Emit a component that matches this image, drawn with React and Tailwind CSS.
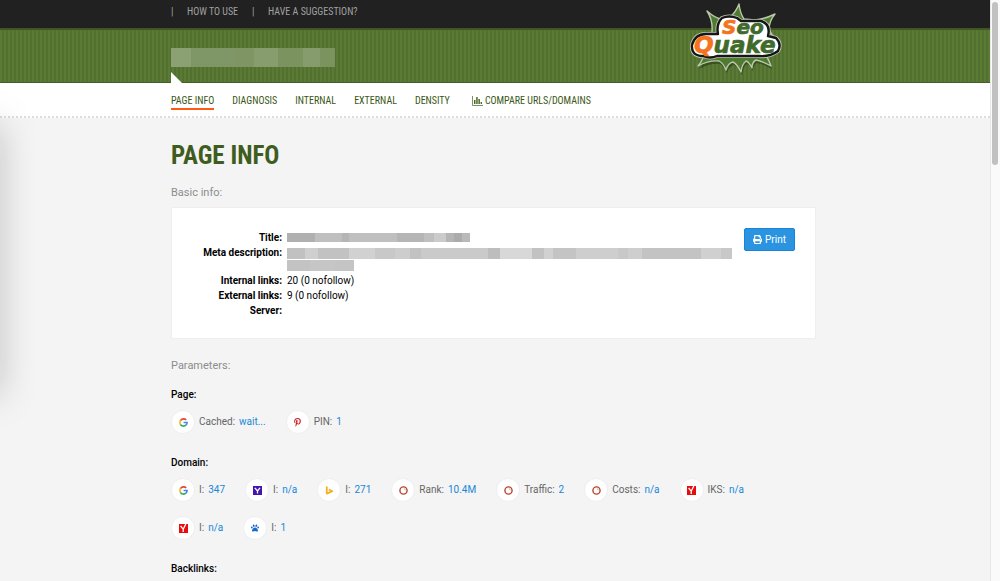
import React from 'react';
import { FaPaw, FaPinterestP, FaPrint } from 'react-icons/fa';

const condensed = "font-['Roboto_Condensed','Liberation_Sans_Narrow',Roboto,sans-serif]";

const topLinks = ['How to use', 'Have a suggestion?'];

const tabs = ['Page info', 'Diagnosis', 'Internal', 'External', 'Density'];

// [width, colour] of each block in a masked value
const siteMask = [
  [20, '#8ca173'], [44, '#7f9766'], [19, '#7f9664'], [24, '#879d6d'],
  [25, '#7b935f'], [17, '#879c6d'], [15, '#7b935f'],
];
const titleMask = [
  [28, '#b0b0b0'], [27, '#bfbfbf'], [7, '#b5b5b5'], [48, '#bfbfbf'], [27, '#b5b5b5'],
  [10, '#bfbfbf'], [12, '#cbcbcb'], [8, '#b5b5b5'], [8, '#ababab'], [8, '#b9b9b9'],
];
const metaMask = [
  [18, '#c1c1c1'], [13, '#cfcfcf'], [31, '#c2c2c2'], [26, '#d1d1d1'], [20, '#c8c8c8'],
  [15, '#cdcdcd'], [11, '#c2c2c2'], [67, '#cacaca'], [12, '#bdbdbd'], [32, '#d8d8d8'],
  [12, '#c2c2c2'], [9, '#d1d1d1'], [23, '#c4c4c4'], [42, '#cecece'], [10, '#c8c8c8'],
  [14, '#cecece'], [59, '#c3c3c3'], [20, '#d0d0d0'], [11, '#c8c8c8'],
];
const metaMask2 = [[23, '#c3c3c3'], [25, '#c6c6c6'], [19, '#c4c4c4']];

const Mask = ({ blocks, className }) => (
  <div className={`flex ${className}`}>
    {blocks.map(([width, color], i) => (
      <span key={i} className="h-full" style={{ width, backgroundColor: color }} />
    ))}
  </div>
);

const burst =
  'M26 11 Q34 18 40 19 L49 17 Q55 12 58 4 Q59 13 63 19 L74 20 Q84 19 94 14 Q88 21 88 30 L97 44 L84 54 Q87 58 90 66 Q81 61 75 60 Q71 62 71 68 Q68 62 65 61 Q61 64 60 72 Q56 64 52 62 Q47 63 45 70 Q43 64 38 61 Q28 60 17 66 Q23 59 23 52 L17 46 L31 32 Q32 20 26 11 Z';
const plate =
  'M41 18 Q48 15 56 18 L60 21 H80 Q90 24 87 36 L95 38 Q101 44 97 51 Q89 57 78 56 H36 Q29 59 22 56 Q10 56 11 45 Q14 34 25 34 L37 34 Q35 24 41 18 Z';

const Logo = () => (
  <svg viewBox="0 0 110 85" className="h-[85px] w-[110px]" role="img" aria-label="SeoQuake">
    <path d={burst} fill="#1d2b0e" opacity="0.5" transform="translate(1 3)" />
    <path d={burst} fill="#4f7a2f" stroke="#b9c7ab" strokeWidth="1.4" strokeLinejoin="round" />
    {/* plate behind the lettering */}
    <path d={plate} stroke="#c3cbbd" strokeWidth="4" strokeLinejoin="round" />
    <path d={plate} fill="#fff" stroke="#161616" strokeWidth="2.4" strokeLinejoin="round" />
    <g
      fontFamily="'DejaVu Sans', sans-serif"
      fontWeight="700"
      fontStyle="italic"
      fill="#3f6a2a"
    >
      <text x="41" y="34" fontSize="20" stroke="#3f6a2a" strokeWidth=".7">
        <tspan fill="#f4731f" stroke="#f4731f">S</tspan>eo
      </text>
      <text x="13" y="53" fontSize="23" stroke="#3f6a2a" strokeWidth=".7">
        <tspan fill="#f4731f" stroke="#f4731f">Q</tspan>uake
      </text>
    </g>
  </svg>
);

const ChartIcon = () => (
  <svg viewBox="0 0 11 10" className="h-[10px] w-[11px]" aria-hidden="true">
    <path d="M.5 0V9.5H11" fill="none" stroke="#7c9161" />
    <path d="M2 4h1.5v4H2zM4.2 1h1.5v7H4.2zM6.4 3h1.5v5H6.4zM8.6 6H10v2H8.6z" fill="#4b6b2c" />
  </svg>
);

const GoogleIcon = () => (
  <svg viewBox="0 0 9 9" className="size-[9px]" fill="none" strokeWidth="1.6">
    <path d="M7.2 2A3.6 3.6 0 0 0 1.4 2.7" stroke="#ea4335" />
    <path d="M1.4 2.7A3.6 3.6 0 0 0 1.4 6.3" stroke="#fbbc05" />
    <path d="M1.4 6.3A3.6 3.6 0 0 0 6.9 7.2" stroke="#34a853" />
    <path d="M6.9 7.2A3.6 3.6 0 0 0 8.1 4.5H4.6" stroke="#4285f4" />
  </svg>
);

const YahooIcon = () => (
  <svg viewBox="0 0 9 9" className="size-[9px]">
    <path d="M0 0h9v9H0z" fill="#4414b0" />
    <path d="M1.8 1.8 4.5 5 7 1.8M4.5 4.8v2.7" fill="none" stroke="#fff" strokeWidth="1.3" />
  </svg>
);

const BingIcon = () => (
  <svg viewBox="0 0 9 9" className="size-[9px]">
    <path d="M1.8 .4V7.6L7.4 5.2 3.8 3.6" fill="none" stroke="#f5b120" strokeWidth="1.8" strokeLinejoin="round" />
  </svg>
);

const SemrushIcon = () => (
  <svg viewBox="0 0 9 9" className="size-[9px]">
    <circle cx="4.5" cy="4.5" r="3.6" fill="#fff" stroke="#b8442c" strokeWidth="1.4" />
    <path d="M4.8 2.6a1.9 1.9 0 0 1 1.6 1.7" fill="none" stroke="#d99080" strokeWidth=".8" />
  </svg>
);

const YandexIcon = () => (
  <svg viewBox="0 0 9 9" className="size-[9px]">
    <path d="M0 0h9v9H0z" fill="#e90c0c" />
    <path d="M1.6 2 4.2 5.2V8M4.2 5.2 6.8 0" fill="none" stroke="#fff" strokeWidth="1.3" />
  </svg>
);

const PinterestIcon = () => <FaPinterestP className="size-[9px] text-[#c8181e]" />;
const BaiduIcon = () => <FaPaw className="size-[8px] text-[#1766cf]" />;

const pageParams = [
  { icon: GoogleIcon, label: 'Cached', value: 'wait...' },
  { icon: PinterestIcon, label: 'PIN', value: '1' },
];

const domainParams = [
  { icon: GoogleIcon, label: 'I', value: '347' },
  { icon: YahooIcon, label: 'I', value: 'n/a' },
  { icon: BingIcon, label: 'I', value: '271' },
  { icon: SemrushIcon, label: 'Rank', value: '10.4M' },
  { icon: SemrushIcon, label: 'Traffic', value: '2' },
  { icon: SemrushIcon, label: 'Costs', value: 'n/a' },
  { icon: YandexIcon, label: 'IKS', value: 'n/a' },
  { icon: YandexIcon, label: 'I', value: 'n/a' },
  { icon: BaiduIcon, label: 'I', value: '1' },
];

const ParamList = ({ items }) => (
  <ul className="flex flex-wrap gap-x-5 gap-y-[14px]">
    {items.map((item, i) => (
      <li key={i} className="flex items-center text-[#666]">
        <span className="mr-1 flex size-6 items-center justify-center rounded-full border border-[#eee] bg-white">
          <item.icon />
        </span>
        <span>{item.label}:</span>
        <a href="#" className="ml-1 text-[#1787d8]">{item.value}</a>
      </li>
    ))}
  </ul>
);

const InfoRow = ({ label, children }) => (
  <tr className="align-top">
    <th scope="row" className="w-[110px] pb-[3px] text-right font-bold">{label}:</th>
    <td className="pl-[5px]">{children}</td>
  </tr>
);

const App = () => {
  return (
    <div className="relative flex h-screen overflow-hidden bg-[#f4f4f4] font-[Roboto,sans-serif] text-[10px] leading-3 text-black">
      <div className="min-w-0 flex-1">
        <header className="border-b border-[#466021] bg-[linear-gradient(#212121_28px,#3f5620_28px,#3f5620_30px,transparent_30px),repeating-linear-gradient(90deg,#5b7b34_0_2px,#527030_2px_4px)]">
          <div className="mx-auto flex h-[82px] max-w-[648px] justify-between">
            <div className="flex flex-col">
              <nav className={`flex h-6 items-center text-[#a0a0a0] uppercase ${condensed}`}>
                {topLinks.map((link) => (
                  <span key={link} className="mr-[14px] flex">
                    <span className="w-4">|</span>
                    <a href="#">{link}</a>
                  </span>
                ))}
              </nav>
              <Mask blocks={siteMask} className="mt-6 h-[19px]" />
              <span className="mt-auto -mb-px block size-[11px] bg-white [clip-path:polygon(0_0,100%_100%,0_100%)]" />
            </div>
            <div className="mr-7">
              <Logo />
            </div>
          </div>
        </header>

        <div className="border-b-2 border-dotted border-[#ddd] bg-white">
          <nav className={`mx-auto flex h-[33px] max-w-[648px] items-center gap-[18px] pt-px text-[#3a5716] uppercase ${condensed}`}>
            {tabs.map((tab, i) => (
              <a key={tab} href="#" className={`border-b-2 pt-1 pb-px ${i === 0 ? 'border-[#ff5a14]' : 'border-transparent'}`}>
                {tab}
              </a>
            ))}
            <a href="#" className="ml-1 flex items-center gap-[2px] pt-px">
              <ChartIcon />
              Compare URLs/domains
            </a>
          </nav>
        </div>

        <main className="mx-auto max-w-[648px] pr-[3px] pt-6">
          <h1 className={`text-[25px] leading-7 font-bold text-[#3f5c1f] uppercase ${condensed}`}>Page info</h1>
          <h2 className="mt-[15px] text-[11px] leading-4 text-[#8d8d8d]">Basic info:</h2>
          <section className="mt-[6px] flex h-[132px] items-start justify-between rounded-xs border border-[#eee] bg-white pt-5 pr-5">
            <table className="mt-1">
              <tbody>
                <InfoRow label="Title"><Mask blocks={titleMask} className="mt-px h-[9px]" /></InfoRow>
                <InfoRow label="Meta description">
                  <Mask blocks={metaMask} className="mt-px h-[11px]" />
                  <Mask blocks={metaMask2} className="mt-px mb-1 h-[11px]" />
                </InfoRow>
                <InfoRow label="Internal links">20 (0 nofollow)</InfoRow>
                <InfoRow label="External links">9 (0 nofollow)</InfoRow>
                <InfoRow label="Server" />
              </tbody>
            </table>
            <button type="button" className="flex h-[23px] items-center gap-[3px] rounded-xs border border-[#1783d9] bg-[#2b94e1] px-2 text-white">
              <FaPrint className="size-[9px]" />
              Print
            </button>
          </section>

          <h2 className="mt-[19px] text-[11px] leading-4 text-[#8d8d8d]">Parameters:</h2>
          <h3 className="mt-[15px] mb-[9px] font-medium">Page:</h3>
          <ParamList items={pageParams} />
          <h3 className="mt-[23px] mb-[9px] font-medium">Domain:</h3>
          <ParamList items={domainParams} />
          <h3 className="mt-[23px] mb-[9px] font-medium">Backlinks:</h3>
        </main>
      </div>

      {/* scrollbar */}
      <div className="w-[10px] border-l border-[#e8e8e8] bg-[#fafafa] pt-[2px] pl-px">
        <div className="h-[163px] w-[6px] rounded-full bg-[#c1c1c1]" />
      </div>

      {/* shadow of the neighbouring panel */}
      <div className="pointer-events-none absolute top-[125px] -left-5 h-[270px] w-4 shadow-[0_0_36px_rgba(0,0,0,0.35)]" />
    </div>
  );
};

export default App;
